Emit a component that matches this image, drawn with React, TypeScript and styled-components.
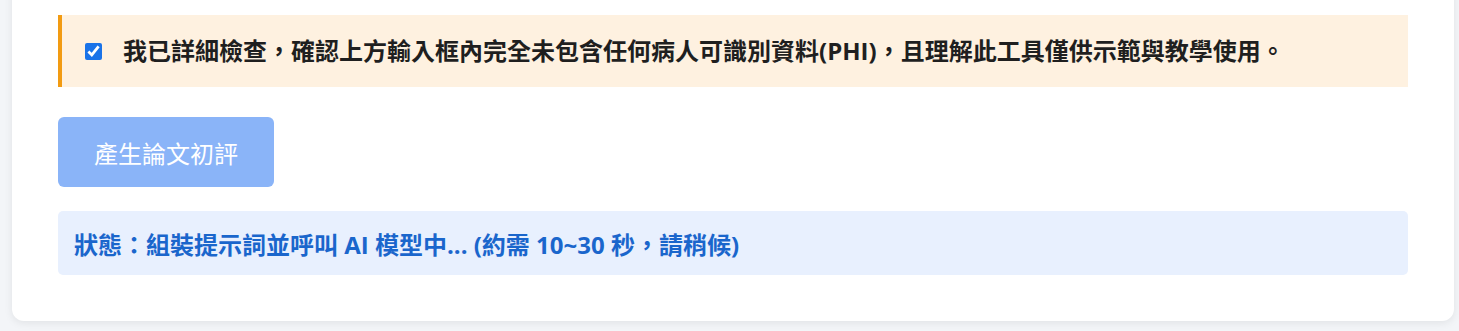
import React from "react";
import styled, { createGlobalStyle } from "styled-components";

const GlobalStyle = createGlobalStyle`
  html, body {
    margin: 0;
    padding: 0;
    background: #f3f5f8;
    overflow: hidden;
  }
  body {
    font-family: "Open Sans", "Noto Sans CJK TC", "Noto Sans", sans-serif;
  }
`;

const Page = styled.div`
  padding: 0 5px 10px 12px;
  margin-top: -20px;
`;

const Card = styled.section`
  background: #ffffff;
  border-radius: 12px;
  box-shadow: 0 2px 8px rgba(0, 0, 0, 0.08);
  padding: 35px 46px 46px;
  display: flex;
  flex-direction: column;
`;

const ConsentBox = styled.label`
  display: flex;
  align-items: center;
  gap: 21px;
  height: 72px;
  box-sizing: border-box;
  padding: 0 20px 0 23px;
  background: #fef1e0;
  border-left: 4px solid #f29b12;
  cursor: pointer;
`;

const Check = styled.input`
  width: 17px;
  height: 17px;
  margin: 0;
  accent-color: #1a73e8;
  flex: none;
`;

const ConsentText = styled.span`
  font-size: 24px;
  font-weight: 700;
  color: #1f1f1f;
  line-height: 1.4;
`;

const GenerateButton = styled.button`
  align-self: flex-start;
  margin-top: 30px;
  width: 216px;
  height: 70px;
  border: none;
  border-radius: 6px;
  background: #8ab4f8;
  color: #ffffff;
  font-family: inherit;
  font-size: 24px;
  cursor: not-allowed;
`;

const StatusBox = styled.div`
  margin-top: 24px;
  height: 64px;
  box-sizing: border-box;
  display: flex;
  align-items: center;
  padding: 0 16px;
  background: #e8f0fe;
  border-radius: 5px;
  color: #1a66cc;
  font-size: 24px;
  font-weight: 700;
`;

export default function App() {
  return (
    <>
      <GlobalStyle />
      <Page>
        <Card>
          <ConsentBox>
            <Check type="checkbox" defaultChecked />
            <ConsentText>
              我已詳細檢查，確認上方輸入框內完全未包含任何病人可識別資料(PHI)，且理解此工具僅供示範與教學使用。
            </ConsentText>
          </ConsentBox>
          <GenerateButton disabled>產生論文初評</GenerateButton>
          <StatusBox>狀態：組裝提示詞並呼叫 AI 模型中... (約需 10~30 秒，請稍候)</StatusBox>
        </Card>
      </Page>
    </>
  );
}
